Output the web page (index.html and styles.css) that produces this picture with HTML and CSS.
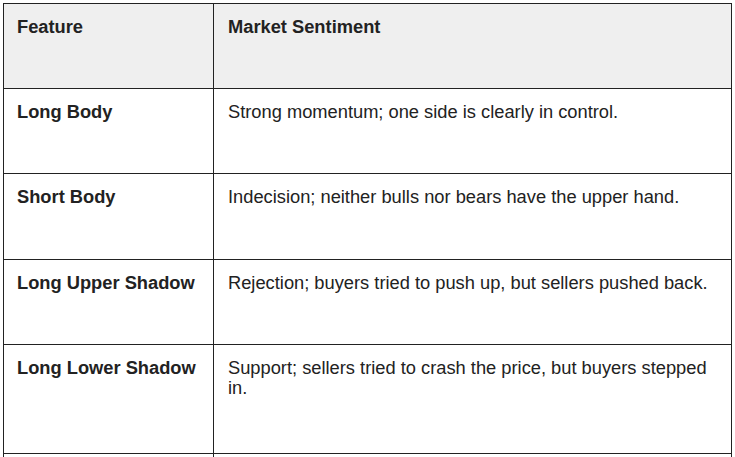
FILE: index.html
```html
<!DOCTYPE html>
<html lang="en">
<head>
<meta charset="utf-8">
<title>Candlestick Features</title>
<link rel="stylesheet" href="styles.css">
</head>
<body>
<table class="sentiment">
  <colgroup>
    <col class="col-feature">
    <col class="col-sentiment">
  </colgroup>
  <thead>
    <tr class="row-a">
      <th>Feature</th>
      <th>Market Sentiment</th>
    </tr>
  </thead>
  <tbody>
    <tr class="row-a">
      <td class="feature">Long Body</td>
      <td>Strong momentum; one side is clearly in control.</td>
    </tr>
    <tr class="row-b">
      <td class="feature">Short Body</td>
      <td>Indecision; neither bulls nor bears have the upper hand.</td>
    </tr>
    <tr class="row-a">
      <td class="feature">Long Upper Shadow</td>
      <td>Rejection; buyers tried to push up, but sellers pushed back.</td>
    </tr>
    <tr class="row-c">
      <td class="feature">Long Lower Shadow</td>
      <td>Support; sellers tried to crash the price, but buyers stepped in.</td>
    </tr>
    <tr class="row-a">
      <td class="feature">&nbsp;</td>
      <td>&nbsp;</td>
    </tr>
  </tbody>
</table>
</body>
</html>
```

FILE: styles.css
```css
html, body {
  margin: 0;
  padding: 0;
  background: #ffffff;
}

body {
  padding: 3px 0 0 3px;
  font-family: "Liberation Sans", Arial, sans-serif;
  font-size: 18.3px;
  color: #222222;
}

.sentiment {
  border-collapse: collapse;
  table-layout: fixed;
  width: 729px;
  border: 1px solid #222222;
}

.col-feature {
  width: 210px;
}

.sentiment th,
.sentiment td {
  border: 1px solid #222222;
  padding: 13px 13px 0 13px;
  vertical-align: top;
  text-align: left;
  line-height: 20px;
}

.sentiment td + td,
.sentiment th + th {
  padding-left: 14px;
}

.sentiment th {
  background: #efefef;
  font-weight: bold;
}

.sentiment .feature {
  font-weight: bold;
}

.row-a {
  height: 85px;
}

.row-b {
  height: 86px;
}

.row-c {
  height: 109px;
}
```
